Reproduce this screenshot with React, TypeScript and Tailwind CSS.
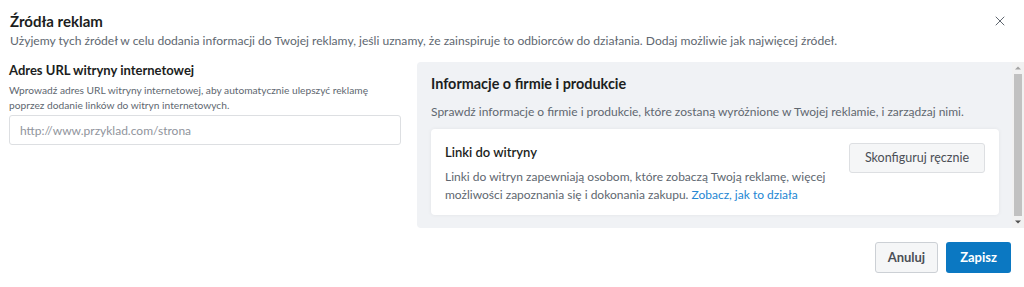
import { X } from 'lucide-react';

export default function App() {
  return (
    <div className="relative h-[287px] w-[1024px] overflow-hidden bg-white font-['Lato',sans-serif] text-[#1c1e21]">
      <header className="px-[10px] pt-[10px]">
        <h1 className="text-[15px] leading-[22px] font-bold text-[#1c1e21]">Źródła reklam</h1>
        <p className="text-[12.1px] leading-[18px] text-[#606770]">
          Użyjemy tych źródeł w celu dodania informacji do Twojej reklamy, jeśli uznamy, że zainspiruje to odbiorców do działania. Dodaj możliwie jak najwięcej źródeł.
        </p>
        <button className="absolute top-[13px] right-[16px] text-[#606770]">
          <X size={16} strokeWidth={1.5} />
        </button>
      </header>

      <div className="mt-[12px] flex">
        <section className="ml-[9px] w-[392px]">
          <h2 className="text-[13px] leading-[16px] font-bold">Adres URL witryny internetowej</h2>
          <p className="mt-[5px] max-w-[372px] text-[10.2px] leading-[15px] text-[#606770]">
            Wprowadź adres URL witryny internetowej, aby automatycznie ulepszyć reklamę poprzez dodanie linków do witryn internetowych.
          </p>
          <input
            className="mt-[2px] h-[30px] w-full rounded-[3px] border border-[#dddfe2] px-[10px] text-[12px] outline-none placeholder:text-[#90949c]"
            placeholder="http://www.przyklad.com/strona"
          />
        </section>

        <div className="ml-[16px] flex h-[166px] flex-1">
          <section className="flex-1 rounded-l-[4px] bg-[#f0f2f5] pl-[14px] pr-[13px] pt-[13px]">
            <h2 className="text-[14.4px] leading-[18px] font-bold">Informacje o firmie i produkcie</h2>
            <p className="mt-[11px] text-[12px] leading-[16px] text-[#606770]">
              Sprawdź informacje o firmie i produkcie, które zostaną wyróżnione w Twojej reklamie, i zarządzaj nimi.
            </p>
            <div className="mt-[9px] flex h-[86px] items-start justify-between rounded-[4px] bg-white pl-[14px] pr-[14px] pt-[15px] shadow-[0_0_4px_rgba(0,0,0,0.06)]">
              <div className="w-[392px]">
                <h3 className="text-[13px] leading-[16px] font-semibold">Linki do witryny</h3>
                <p className="mt-[8px] text-[12px] leading-[18px] text-[#606770]">
                  Linki do witryn zapewniają osobom, które zobaczą Twoją reklamę, więcej możliwości zapoznania się i dokonania zakupu.{' '}
                  <a className="text-[#2386d3]">Zobacz, jak to działa</a>
                </p>
              </div>
              <button className="-mt-[1px] h-[30px] rounded-[3px] border border-[#dddfe2] bg-[#f5f6f7] px-[15px] text-[12.5px] text-[#4b4f56]">
                Skonfiguruj ręcznie
              </button>
            </div>
          </section>
          <div className="flex w-[12px] flex-col items-center bg-[#f1f1f1]">
            <svg width="12" height="12" viewBox="0 0 12 12" className="shrink-0">
              <path d="M3 7.5 L6 4.5 L9 7.5 Z" fill="#a3a3a3" />
            </svg>
            <div className="w-[8px] flex-1 bg-[#c1c1c1]" />
            <svg width="12" height="12" viewBox="0 0 12 12" className="shrink-0">
              <path d="M3 4.5 L6 7.5 L9 4.5 Z" fill="#505050" />
            </svg>
          </div>
        </div>
      </div>

      <footer className="mt-[14px] flex justify-end gap-[8px] pr-[13px]">
        <button className="h-[31px] rounded-[3px] border border-[#ccd0d5] bg-[#f5f6f7] px-[12px] text-[13px] font-bold text-[#4b4f56]">
          Anuluj
        </button>
        <button className="h-[31px] rounded-[3px] bg-[#0b78c2] px-[14px] text-[13px] font-bold text-white">
          Zapisz
        </button>
      </footer>
    </div>
  );
}
